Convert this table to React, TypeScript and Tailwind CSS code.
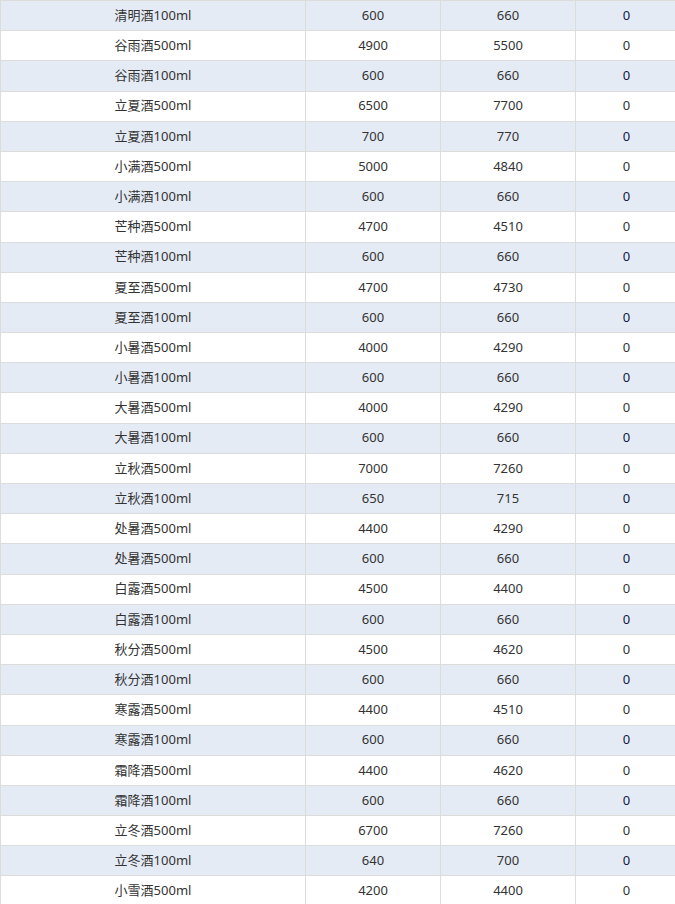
const rows: [string, string, string, string][] = [
  ["清明酒100ml", "600", "660", "0"],
  ["谷雨酒500ml", "4900", "5500", "0"],
  ["谷雨酒100ml", "600", "660", "0"],
  ["立夏酒500ml", "6500", "7700", "0"],
  ["立夏酒100ml", "700", "770", "0"],
  ["小满酒500ml", "5000", "4840", "0"],
  ["小满酒100ml", "600", "660", "0"],
  ["芒种酒500ml", "4700", "4510", "0"],
  ["芒种酒100ml", "600", "660", "0"],
  ["夏至酒500ml", "4700", "4730", "0"],
  ["夏至酒100ml", "600", "660", "0"],
  ["小暑酒500ml", "4000", "4290", "0"],
  ["小暑酒100ml", "600", "660", "0"],
  ["大暑酒500ml", "4000", "4290", "0"],
  ["大暑酒100ml", "600", "660", "0"],
  ["立秋酒500ml", "7000", "7260", "0"],
  ["立秋酒100ml", "650", "715", "0"],
  ["处暑酒500ml", "4400", "4290", "0"],
  ["处暑酒500ml", "600", "660", "0"],
  ["白露酒500ml", "4500", "4400", "0"],
  ["白露酒100ml", "600", "660", "0"],
  ["秋分酒500ml", "4500", "4620", "0"],
  ["秋分酒100ml", "600", "660", "0"],
  ["寒露酒500ml", "4400", "4510", "0"],
  ["寒露酒100ml", "600", "660", "0"],
  ["霜降酒500ml", "4400", "4620", "0"],
  ["霜降酒100ml", "600", "660", "0"],
  ["立冬酒500ml", "6700", "7260", "0"],
  ["立冬酒100ml", "640", "700", "0"],
  ["小雪酒500ml", "4200", "4400", "0"],
];

const App = () => {
  return (
    <div className="w-[675px] h-[904px] overflow-hidden bg-white">
      <div
        className="w-[677px] border-t border-[#dcdcdc] text-[13px] text-[#333] font-['Noto_Sans','Noto_Sans_CJK_SC',sans-serif]"
      >
        {rows.map(([name, cost, price, stock], i) => {
          const striped = i % 2 === 0;
          return (
            <div
              key={i}
              className={`grid grid-cols-[305px_135px_135px_1fr] h-[30.2px] border-b border-[#dcdcdc] ${
                striped ? "bg-[#e5ebf5]" : "bg-white"
              }`}
            >
              <div className="flex items-center justify-center border-l border-[#dcdcdc]">{name}</div>
              <div className="flex items-center justify-center border-l border-[#dcdcdc]">{cost}</div>
              <div className="flex items-center justify-center border-l border-[#dcdcdc]">{price}</div>
              <div
                className={`flex items-center justify-center border-l border-[#dcdcdc] ${
                  striped ? "text-[#0d1a45]" : ""
                }`}
              >
                {stock}
              </div>
            </div>
          );
        })}
      </div>
    </div>
  );
};

export default App;
